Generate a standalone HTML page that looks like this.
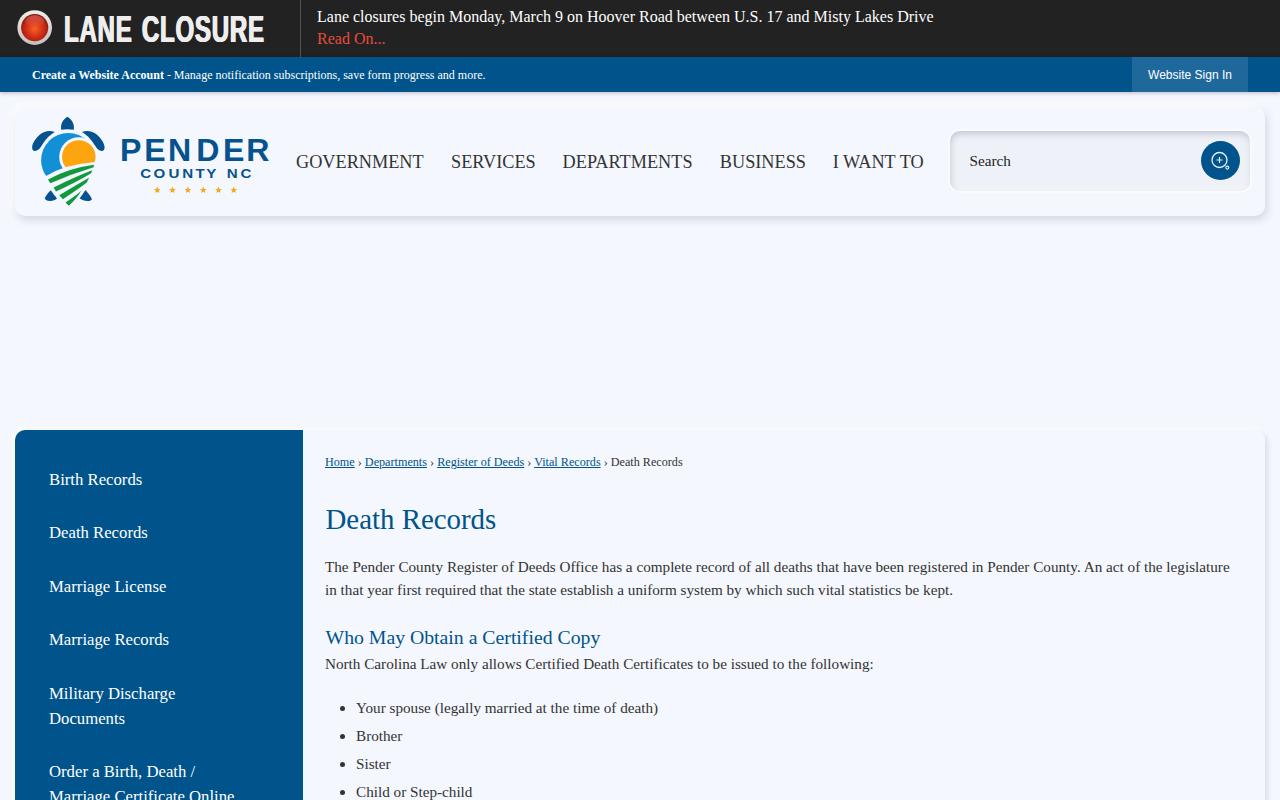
<!DOCTYPE html>
<html lang="en">
<head>
<meta charset="utf-8">
<title>Death Records | Pender County, NC</title>
<style>
*{box-sizing:border-box;margin:0;padding:0}
html,body{width:1280px;height:800px;overflow:hidden}
body{background:#f4f7fd;font-family:"Liberation Serif",serif;color:#333;position:relative}
a{color:inherit;text-decoration:none}
/* alert bar */
#alert{position:absolute;left:0;top:0;width:1280px;height:57px;background:#222}
#alert .divider{position:absolute;left:300px;top:0;width:1px;height:57px;background:#555}
#alert .dot{position:absolute;left:16px;top:10px;width:36px;height:36px}
#alert .title{position:absolute;left:63.5px;top:1px;height:57px;line-height:57px;font-family:"Liberation Sans",sans-serif;font-weight:bold;font-size:37.2px;color:#eee;white-space:nowrap;transform-origin:0 50%;transform:scaleX(.646);letter-spacing:1.2px;word-spacing:3px;text-shadow:.85px 0 0 #eee,-.85px 0 0 #eee}
#alert .msg{position:absolute;left:317px;top:7px;font-size:16px;line-height:20px;color:#fff;white-space:nowrap}
#alert .more{position:absolute;left:317px;top:29px;font-size:16px;line-height:20px;color:#e74c3c;white-space:nowrap}
/* blue bar */
#bar{position:absolute;left:0;top:57px;width:1280px;height:35px;background:#00538b;box-shadow:0 1px 4px rgba(0,0,40,.25)}
#bar .txt{position:absolute;left:32px;top:1px;line-height:35px;font-size:12px;color:#fff;white-space:nowrap}
#bar .signin{position:absolute;left:1132px;top:0;width:116px;height:35px;background:#1f689c;color:#fff;font-family:"Liberation Sans",sans-serif;font-size:12px;line-height:36px;text-align:center}
/* header card */
#head{position:absolute;left:15px;top:107px;width:1250px;height:108.5px;background:#f4f7fd;border-radius:10px;box-shadow:2px 4px 9px rgba(50,60,100,.17),-3px -3px 7px rgba(255,255,255,.9)}
#logo{position:absolute;left:0;top:0;width:270px;height:108px}
#nav{position:absolute;left:0;top:0;height:108px}
#nav a{position:absolute;top:.5px;line-height:108px;font-size:18.24px;color:#333;white-space:nowrap}
#search{position:absolute;left:935px;top:24px;width:300px;height:60px;background:#eef1f7;border-radius:10px;box-shadow:inset .5px 3px 6px rgba(60,70,100,.24),inset -2px -2px 4px rgba(255,255,255,.6),0 0 0 2px rgba(255,255,255,.45)}
#search .ph{position:absolute;left:19.5px;top:-0.5px;line-height:60px;font-size:15.2px;color:#222}
#search .btn{position:absolute;left:251px;top:10px;width:39px;height:39px;border-radius:50%;background:#00538b}
/* content */
#side{position:absolute;left:15px;top:430px;width:288px;height:380px;background:#00538b;border-radius:10px 0 0 0}
#side a{position:absolute;left:34px;font-size:16.72px;line-height:25px;color:#fff;white-space:nowrap}
#wrap{position:absolute;left:15px;top:430px;width:1250px;height:380px;border-radius:10px 10px 0 0;box-shadow:3px 3px 5px rgba(50,60,100,.12),-2px -2px 4px rgba(255,255,255,.8)}
#main{position:absolute;left:303px;top:430px;width:962px;height:380px;background:#f4f7fd;border-radius:0 10px 0 0}
#crumb{position:absolute;left:22px;top:24px;font-size:12.16px;line-height:16px;color:#333;white-space:nowrap}
#crumb a{color:#00538b;text-decoration:underline}
h1{position:absolute;left:22.5px;top:69px;font-size:28.88px;line-height:40px;font-weight:normal;color:#00538b;white-space:nowrap}
.p{position:absolute;left:22px;font-size:15.2px;line-height:23px;color:#333;white-space:nowrap}
h2{position:absolute;left:22.5px;top:194px;font-size:19.76px;line-height:26px;font-weight:normal;color:#00538b;white-space:nowrap}
ul{position:absolute;left:53px;top:264px;list-style:none}
ul li{font-size:15.2px;line-height:28px;color:#333;position:relative;white-space:nowrap}
ul li:before{content:"";position:absolute;left:-16px;top:12px;width:5px;height:5px;border-radius:50%;background:#333}
</style>
</head>
<body>
<div id="alert">
  <svg class="dot" viewBox="0 0 36 36"><defs><linearGradient id="lg" x1="0" y1="0" x2="0" y2="1"><stop offset="0" stop-color="#efedeb"/><stop offset="1" stop-color="#c4c0bd"/></linearGradient><radialGradient id="rg" cx=".5" cy=".55" r=".52"><stop offset="0" stop-color="#fb6226"/><stop offset=".5" stop-color="#d63619"/><stop offset=".85" stop-color="#b2220f"/><stop offset="1" stop-color="#8a190c"/></radialGradient><linearGradient id="gl" x1="0" y1="0" x2="0" y2="1"><stop offset="0" stop-color="#ff9a9a" stop-opacity=".42"/><stop offset="1" stop-color="#ff9a9a" stop-opacity="0"/></linearGradient></defs><circle cx="18.7" cy="17.6" r="17.3" fill="url(#lg)"/><circle cx="18.7" cy="17.6" r="13.6" fill="url(#rg)"/><ellipse cx="18.7" cy="11.2" rx="9.5" ry="6" fill="url(#gl)"/></svg>
  <div class="title">LANE CLOSURE</div>
  <div class="divider"></div>
  <div class="msg">Lane closures begin Monday, March 9 on Hoover Road between U.S. 17 and Misty Lakes Drive</div>
  <div class="more">Read On...</div>
</div>
<div id="bar">
  <div class="txt"><b>Create a Website Account</b> - Manage notification subscriptions, save form progress and more.</div>
  <div class="signin">Website Sign In</div>
</div>
<div id="head">
  <svg id="logo" viewBox="15 107 270 108" width="270" height="108">
    <g fill="#05528f">
      <path d="M61.2,129.8 C60.8,127 61.1,124.3 62.2,122.2 C63.5,119.8 65.5,117.9 67.4,116.8 C69.4,117.9 71.4,119.8 72.7,122.2 C73.8,124.3 74.2,127 73.8,129.8 Q67.5,128.9 61.2,129.8 Z"/>
      <path d="M54.8,132 C50,129.9 44,131 40,134.4 C35.5,138.3 32.3,143.3 32.1,147 C32,149.6 33.4,151.2 34.9,151 C37.6,150.6 39.8,148.8 41.3,146.3 C44.3,141.3 48.2,135.8 54.8,132 Z"/>
      <path d="M81.9,132 C86.7,129.9 92.7,131 96.7,134.4 C101.2,138.3 104.4,143.3 104.6,147 C104.7,149.6 103.3,151.2 101.8,151 C99.1,150.6 96.9,148.8 95.4,146.3 C92.4,141.3 88.5,135.8 81.9,132 Z"/>
    </g>
    <path fill="#1190d6" d="M68.3,133 A27.2,27.2 0 0 0 41.1,160.2 C41.1,166 43,171.5 46.1,175.8 L68.8,206 L79.5,193.5 C86,185 92,175 94.5,166.5 C95.3,163.5 95.5,161.5 95.5,160.2 A27.2,27.2 0 0 0 68.3,133 Z"/>
    <circle cx="78.8" cy="156.9" r="19.6" fill="#f4f7fd"/>
    <circle cx="78.8" cy="156.9" r="16.75" fill="#fca50f"/>
    <path fill="#f4f7fd" d="M46.1,176 Q65.35,164.3 95.2,162.1 L100,161.4 L100,210 L40,210 L40,178 Z"/>
    <g fill="#11993b">
      <path d="M48,179.6 Q67.65,168.2 94,164.7 L93.6,167.2 Q71.6,173.8 50.4,183.3 Z"/>
      <path d="M53.6,187.4 Q75.65,176.5 92.3,170.2 L91.1,173.2 Q77.55,181.6 56,191.4 Z"/>
      <path d="M59.25,195.2 Q78.1,183.8 89.1,177.7 L86.75,182.6 Q80.1,188 62.9,199.2 Z"/>
      <path d="M65.5,202.4 Q75.2,196.2 81.3,190.8 Q76.8,198.6 68.8,205.8 Z"/>
    </g>
    <g fill="#05528f">
      <path d="M50.8,190.3 C48,193 45.5,196 44.8,198.6 C46,200.5 48,201.2 50,201.1 C53,200.8 55.5,200 57,198.6 C55,196 53,193.5 50.8,190.3 Z"/>
      <path d="M85.5,190 C83.5,193 81.5,196 79.6,198.3 C81.5,199.8 84.5,201 87.4,201.1 C89.5,201.1 91.2,200.4 92,199.2 C90.5,196 88,193 85.5,190 Z"/>
    </g>
    <text id="lt1" y="160.6" font-family="Liberation Sans, sans-serif" font-weight="bold" font-size="32.1" fill="#05528f" x="120 144.3 168.1 196.2 223.1 246.2">PENDER</text>
    <g transform="translate(141 178.1) scale(1.2 1)"><text id="lt2" y="0" font-family="Liberation Sans, sans-serif" font-weight="bold" font-size="12.6" fill="#05528f" x="-0.7 10.5 23 34.3 45.5 54.3 64 71.5 83">COUNTY NC</text></g>
    <g fill="#f6a81c" id="stars">
      <path d="M0,-3.6 L1.06,-1.1 L3.42,-1.1 L1.5,0.42 L2.12,2.9 L0,1.45 L-2.12,2.9 L-1.5,0.42 L-3.42,-1.1 L-1.06,-1.1 Z" transform="translate(157.25 190.2)"/>
      <path d="M0,-3.6 L1.06,-1.1 L3.42,-1.1 L1.5,0.42 L2.12,2.9 L0,1.45 L-2.12,2.9 L-1.5,0.42 L-3.42,-1.1 L-1.06,-1.1 Z" transform="translate(172.5 190.2)"/>
      <path d="M0,-3.6 L1.06,-1.1 L3.42,-1.1 L1.5,0.42 L2.12,2.9 L0,1.45 L-2.12,2.9 L-1.5,0.42 L-3.42,-1.1 L-1.06,-1.1 Z" transform="translate(187.9 190.2)"/>
      <path d="M0,-3.6 L1.06,-1.1 L3.42,-1.1 L1.5,0.42 L2.12,2.9 L0,1.45 L-2.12,2.9 L-1.5,0.42 L-3.42,-1.1 L-1.06,-1.1 Z" transform="translate(203.25 190.2)"/>
      <path d="M0,-3.6 L1.06,-1.1 L3.42,-1.1 L1.5,0.42 L2.12,2.9 L0,1.45 L-2.12,2.9 L-1.5,0.42 L-3.42,-1.1 L-1.06,-1.1 Z" transform="translate(218.5 190.2)"/>
      <path d="M0,-3.6 L1.06,-1.1 L3.42,-1.1 L1.5,0.42 L2.12,2.9 L0,1.45 L-2.12,2.9 L-1.5,0.42 L-3.42,-1.1 L-1.06,-1.1 Z" transform="translate(233.75 190.2)"/>
    </g>
  </svg>
  <div id="nav">
    <a style="left:281px">GOVERNMENT</a>
    <a style="left:436px">SERVICES</a>
    <a style="left:547.6px">DEPARTMENTS</a>
    <a style="left:704.8px">BUSINESS</a>
    <a style="left:817.8px">I WANT TO</a>
  </div>
  <div id="search">
    <div class="ph">Search</div>
    <div class="btn"><svg width="39" height="39" viewBox="0 0 39 39"><circle cx="18.5" cy="19" r="7.5" fill="none" stroke="#e6f1fb" stroke-width="1.3"/><path d="M18.5 16v6M15.5 19h6" stroke="#e6f1fb" stroke-width="1.2"/><circle cx="26.3" cy="26.6" r="1.5" fill="none" stroke="#e6f1fb" stroke-width="1.1"/></svg></div>
  </div>
</div>
<div id="wrap"></div>
<div id="side">
  <a style="top:37px">Birth Records</a>
  <a style="top:90px">Death Records</a>
  <a style="top:144px">Marriage License</a>
  <a style="top:197px">Marriage Records</a>
  <a style="top:251px">Military Discharge<br>Documents</a>
  <a style="top:329px">Order a Birth, Death /<br>Marriage Certificate Online</a>
</div>
<div id="main">
  <div id="crumb"><a>Home</a> › <a>Departments</a> › <a>Register of Deeds</a> › <a>Vital Records</a> › Death Records</div>
  <h1>Death Records</h1>
  <div class="p" style="top:125px">The Pender County Register of Deeds Office has a complete record of all deaths that have been registered in Pender County. An act of the legislature<br>in that year first required that the state establish a uniform system by which such vital statistics be kept.</div>
  <h2>Who May Obtain a Certified Copy</h2>
  <div class="p" style="top:222px">North Carolina Law only allows Certified Death Certificates to be issued to the following:</div>
  <ul>
    <li>Your spouse (legally married at the time of death)</li>
    <li>Brother</li>
    <li>Sister</li>
    <li>Child or Step-child</li>
  </ul>
</div>
</body>
</html>
